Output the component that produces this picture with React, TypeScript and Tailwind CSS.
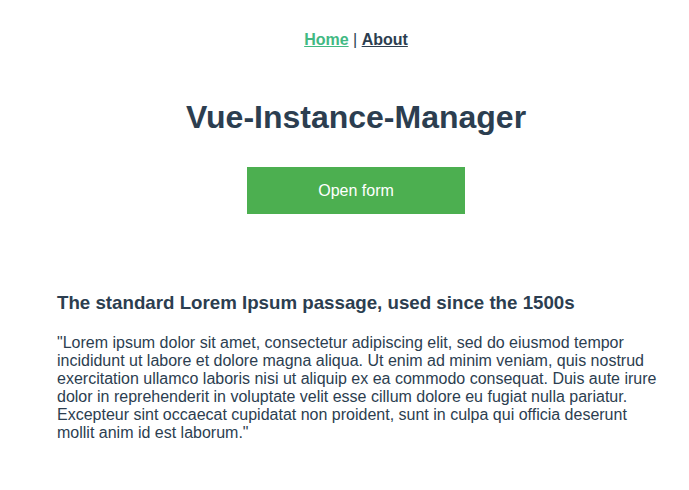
import React from 'react';

const App: React.FC = () => {
  return (
    <div className="min-h-screen w-full bg-white text-[#2c3e50] font-['Liberation_Sans',Arial,sans-serif]">
      <div className="pl-[23px]">
        {/* Nav */}
        <nav className="pt-[31px] pb-[29px] text-center text-[16px] leading-[18px] font-bold">
          <a href="#" className="text-[#42b983] underline">Home</a>
          <span className="font-normal"> | </span>
          <a href="#" className="text-[#2c3e50] underline">About</a>
        </nav>

        {/* Main */}
        <div className="flex flex-col items-center">
          <h1 className="mt-[21px] text-[32px] leading-[37px] font-bold">Vue-Instance-Manager</h1>
          <button className="mt-[31px] w-[218px] h-[47px] bg-[#4caf50] text-white text-[16px]">
            Open form
          </button>
        </div>
      </div>

      {/* Content */}
      <div className="pl-[57px] pr-[28px] mt-[78px]">
        <h3 className="text-[18.72px] leading-[21px] font-bold">
          The standard Lorem Ipsum passage, used since the 1500s
        </h3>
        <p className="mt-[21px] text-[16px] leading-[18px]">
          "Lorem ipsum dolor sit amet, consectetur adipiscing elit, sed do eiusmod tempor incididunt ut labore et dolore magna aliqua. Ut enim ad minim veniam, quis nostrud exercitation ullamco laboris nisi ut aliquip ex ea commodo consequat. Duis aute irure dolor in reprehenderit in voluptate velit esse cillum dolore eu fugiat nulla pariatur. Excepteur sint occaecat cupidatat non proident, sunt in culpa qui officia deserunt mollit anim id est laborum."
        </p>
      </div>
    </div>
  );
};

export default App;
